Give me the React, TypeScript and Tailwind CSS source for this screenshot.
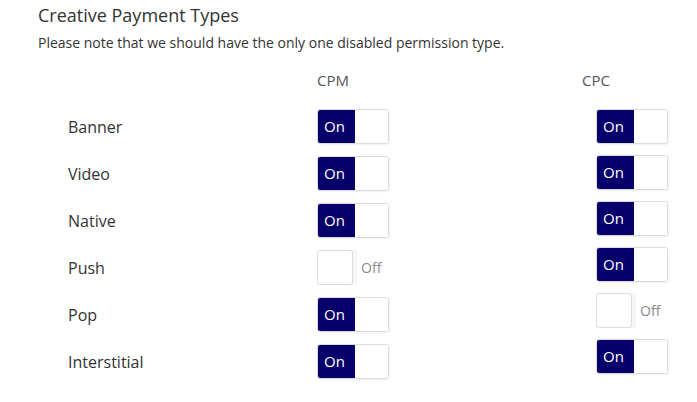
const rows = ['Banner', 'Video', 'Native', 'Push', 'Pop', 'Interstitial'];
const cpm = [true, true, true, false, true, true];
const cpc = [true, true, true, true, false, true];

function Toggle({ on }: { on: boolean }) {
  if (!on) {
    return (
      <div className="flex h-[35px] items-center">
        <div className="h-[35px] w-[36px] rounded-[3px] border border-[#dcdcdc] bg-white shadow-[4px_0_0_#f6f6f6]" />
        <span className="ml-[8px] text-[14px] text-[#8a8a8a]">Off</span>
      </div>
    );
  }
  return (
    <div className="flex h-[35px] w-[72px] overflow-hidden rounded-[3px] border border-[#dcdcdc] shadow-[1px_1px_2px_rgba(0,0,0,0.06)]">
      <div className="flex w-[37px] items-center bg-[#07006b] pl-[6px] text-[15px] text-white">On</div>
      <div className="flex-1 bg-white" />
    </div>
  );
}

export default function App() {
  return (
    <div
      className="h-[402px] w-[697px] bg-white px-[38px] pt-[3px] text-[#333]"
      style={{ fontFamily: '"Open Sans", sans-serif' }}
    >
      <h2 className="text-[18px] leading-[24px] text-[#333]">Creative Payment Types</h2>
      <p className="mt-[6px] text-[14px] leading-[19px] text-[#333]">
        Please note that we should have the only one disabled permission type.
      </p>

      <div className="mt-[18px] flex text-[15px] leading-[20px] text-[#555]">
        <div className="ml-[279px] w-[265px] shrink-0">CPM</div>
        <div>CPC</div>
      </div>

      <div className="mt-[19px] flex pl-[30px]">
        <div className="flex w-[249px] shrink-0 flex-col gap-[12px]">
          {rows.map((r) => (
            <div key={r} className="flex h-[35px] items-center text-[16px] text-[#333]">
              {r}
            </div>
          ))}
        </div>
        <div className="flex w-[279px] shrink-0 flex-col gap-[12px]">
          {cpm.map((v, i) => (
            <Toggle key={i} on={v} />
          ))}
        </div>
        <div className="flex shrink-0 flex-col gap-[11px]">
          {cpc.map((v, i) => (
            <Toggle key={i} on={v} />
          ))}
        </div>
      </div>
    </div>
  );
}
